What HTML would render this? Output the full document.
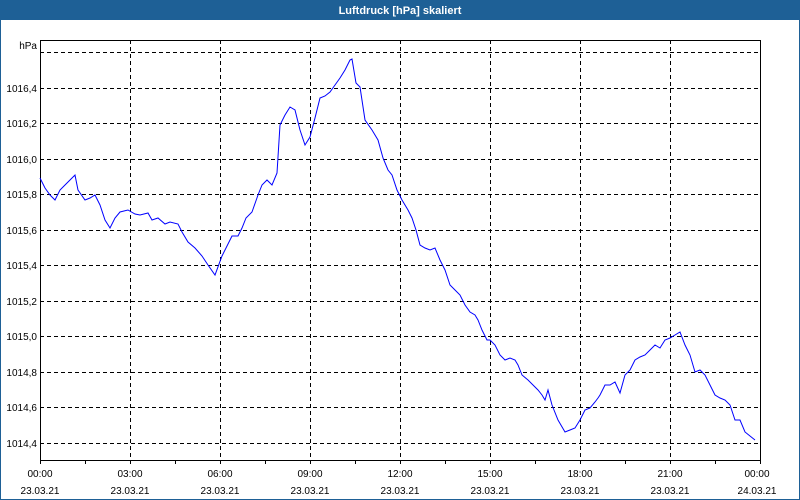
<!DOCTYPE html><html><head><style>
body{margin:0;width:800px;height:500px;overflow:hidden;background:#fff;font-family:"Liberation Sans",sans-serif}
</style></head><body>
<svg width="800" height="500" xmlns="http://www.w3.org/2000/svg" style="display:block">
<rect x="0" y="0" width="800" height="500" fill="#fff"/>
<rect x="0.5" y="0.5" width="799" height="499" fill="none" stroke="#1e6096"/>
<rect x="0" y="0" width="800" height="20" fill="#1e6096"/>
<text x="400" y="14" font-size="11" font-weight="bold" fill="#fff" text-anchor="middle">Luftdruck [hPa] skaliert</text>
<g stroke="#000" stroke-dasharray="4,3" stroke-width="1">
<path d="M40 52.5H760M40 88.5H760M40 123.5H760M40 159.5H760M40 194.5H760M40 230.5H760M40 265.5H760M40 301.5H760M40 336.5H760M40 372.5H760M40 407.5H760M40 443.5H760"/>
<path d="M130.5 40V460M220.5 40V460M310.5 40V460M400.5 40V460M490.5 40V460M580.5 40V460M670.5 40V460"/>
</g>
<rect x="40.5" y="40.5" width="720" height="420" fill="none" stroke="#000"/>
<g stroke="#000"><path d="M40.5 461V464M85.5 461V464M130.5 461V464M175.5 461V464M220.5 461V464M265.5 461V464M310.5 461V464M355.5 461V464M400.5 461V464M445.5 461V464M490.5 461V464M535.5 461V464M580.5 461V464M625.5 461V464M670.5 461V464M715.5 461V464M760.5 461V464"/></g>
<g font-size="10" fill="#000" text-anchor="end">
<text x="37" y="49">hPa</text>
<text x="37" y="92">1016,4</text><text x="37" y="127">1016,2</text><text x="37" y="163">1016,0</text><text x="37" y="198">1015,8</text><text x="37" y="234">1015,6</text><text x="37" y="269">1015,4</text><text x="37" y="305">1015,2</text><text x="37" y="340">1015,0</text><text x="37" y="376">1014,8</text><text x="37" y="411">1014,6</text><text x="37" y="447">1014,4</text>
</g>
<g font-size="10" fill="#000" text-anchor="middle">
<text x="40" y="477">00:00</text><text x="130" y="477">03:00</text><text x="220" y="477">06:00</text><text x="310" y="477">09:00</text><text x="400" y="477">12:00</text><text x="490" y="477">15:00</text><text x="580" y="477">18:00</text><text x="670" y="477">21:00</text><text x="757" y="477">00:00</text>
<text x="40" y="494">23.03.21</text><text x="130" y="494">23.03.21</text><text x="220" y="494">23.03.21</text><text x="310" y="494">23.03.21</text><text x="400" y="494">23.03.21</text><text x="490" y="494">23.03.21</text><text x="580" y="494">23.03.21</text><text x="670" y="494">23.03.21</text><text x="757" y="494">24.03.21</text>
</g>
<polyline fill="none" stroke="#0000ff" stroke-width="1" points="40,178 45,188 50,195 55,200 60,190 65,185 70,180 75,175 78,190 85,200 90,198 95,195 100,205 105,220 110,228 115,218 120,212 128,210 135,214 140,215 148,213 152,220 158,218 165,224 170,222 178,224 182,232 188,242 195,248 202,256 208,265 215,275 222,256 228,244 232,236 238,236 242,228 246,218 252,212 258,195 262,185 267,180 272,185 277,173 280,125 285,115 290,107 295,110 300,130 305,145 310,137 315,118 320,98 325,96 330,92 335,85 340,78 345,70 350,60 352,59 356,83 360,87 365,120 372,130 378,140 383,158 388,170 392,175 397,190 402,200 408,210 412,218 416,230 420,245 425,248 430,250 435,248 440,260 445,270 450,285 455,290 460,295 465,305 470,312 475,315 478,320 482,330 487,340 490,340 495,345 500,355 505,360 510,358 515,360 518,365 522,375 528,380 533,385 538,390 542,395 545,400 548,390 552,405 558,420 565,432 570,430 575,428 580,420 585,410 590,408 595,402 598,398 600,395 605,385 610,385 615,382 620,393 625,375 630,370 635,360 640,357 645,355 650,350 655,345 660,348 665,340 670,338 675,335 680,332 685,345 690,355 695,372 700,370 705,375 710,385 715,395 720,398 725,400 730,405 735,420 740,420 745,432 750,436 755,440"/>
</svg>
</body></html>
